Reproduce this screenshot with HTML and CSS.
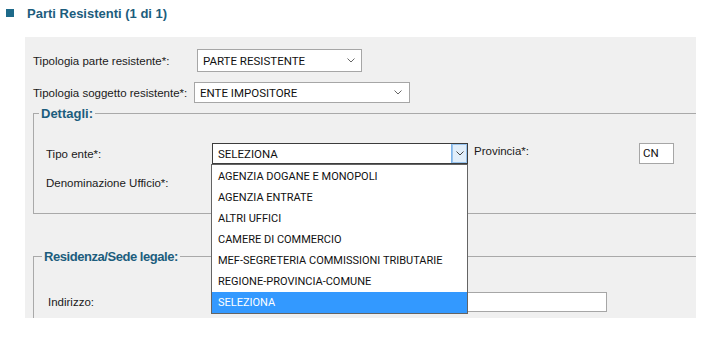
FILE: index.html
```html
<!DOCTYPE html>
<html lang="it">
<head>
    <meta charset="UTF-8">
    <meta name="viewport" content="width=device-width, initial-scale=1.0">
    <title>Parti Resistenti</title>
    <link rel="stylesheet" href="styles.css">
</head>
<body>
    <div class="heading">
        <span class="square"></span>
        <h2>Parti Resistenti (1 di 1)</h2>
    </div>

    <div class="panel">

        <div class="row row-parte">
            <label class="lbl-parte">Tipologia parte resistente*:</label>
            <div class="select select-parte">
                <span>PARTE RESISTENTE</span>
                <svg class="chev" width="8" height="5" viewBox="0 0 8 5"><polyline points="0.5,0.5 4,4 7.5,0.5" fill="none" stroke="#666" stroke-width="1"/></svg>
            </div>
        </div>

        <div class="row row-soggetto">
            <label class="lbl-soggetto">Tipologia soggetto resistente*:</label>
            <div class="select select-soggetto">
                <span>ENTE IMPOSITORE</span>
                <svg class="chev" width="8" height="5" viewBox="0 0 8 5"><polyline points="0.5,0.5 4,4 7.5,0.5" fill="none" stroke="#666" stroke-width="1"/></svg>
            </div>
        </div>

        <fieldset class="box box-dettagli">
            <legend>Dettagli:</legend>

            <div class="frow frow-tipo">
                <label class="flabel">Tipo ente*:</label>
                <div class="combo">
                    <div class="select select-open">
                        <span>SELEZIONA</span>
                        <span class="arrow-btn">
                            <svg width="8" height="5" viewBox="0 0 8 5"><polyline points="0.5,0.5 4,4 7.5,0.5" fill="none" stroke="#444" stroke-width="1"/></svg>
                        </span>
                    </div>
                    <ul class="dropdown">
                        <li>AGENZIA DOGANE E MONOPOLI</li>
                        <li>AGENZIA ENTRATE</li>
                        <li>ALTRI UFFICI</li>
                        <li>CAMERE DI COMMERCIO</li>
                        <li>MEF-SEGRETERIA COMMISSIONI TRIBUTARIE</li>
                        <li>REGIONE-PROVINCIA-COMUNE</li>
                        <li class="active">SELEZIONA</li>
                    </ul>
                </div>
                <label class="prov">Provincia*:</label>
                <input type="text" class="input input-cn" value="CN">
            </div>

            <div class="frow frow-denom">
                <label class="flabel">Denominazione Ufficio*:</label>
            </div>
        </fieldset>

        <fieldset class="box box-residenza">
            <legend>Residenza/Sede legale:</legend>
            <div class="frow frow-addr">
                <label class="flabel lbl-addr">Indirizzo:</label>
                <input type="text" class="input input-addr">
            </div>
        </fieldset>

    </div>
</body>
</html>
```

FILE: styles.css
```css
body{
    margin: 0;
    padding: 0;
    background-color: #fff;
    font-family: 'Liberation Sans', Arial, sans-serif;
    color: #1a1a1a;
}

.heading{
    display: flex;
    align-items: center;
    height: 26px;
    padding-left: 6px;
}
.square{
    width: 8px;
    height: 8px;
    background-color: #1e6a8a;
    margin-right: 13px;
}
.heading h2{
    margin: 0;
    font-size: 13px;
    font-weight: bold;
    color: #1c5d7d;
    line-height: 15px;
}

.panel{
    margin: 11px 0 0 25px;
    width: 671px;
    height: 281px;
    box-sizing: border-box;
    padding: 12px 0 0 8px;
    background-color: #f0f0f0;
    overflow: hidden;
}

label{
    font-size: 11.5px;
    line-height: 14px;
    flex: none;
}

.row{
    display: flex;
    align-items: center;
}
.row-parte{
    height: 23px;
}
.row-soggetto{
    height: 21px;
    margin-top: 10px;
}
.lbl-parte{
    width: 164px;
}
.lbl-soggetto{
    width: 161px;
}

/* finti select stile windows */
.select{
    display: flex;
    align-items: center;
    justify-content: space-between;
    box-sizing: border-box;
    background-color: #fff;
    border: 1px solid #a6a6a6;
    padding: 0 6px 0 5px;
    font-family: Roboto, 'Liberation Sans', sans-serif;
    font-size: 11.5px;
    color: #111;
}
.select-parte{
    width: 165px;
    height: 23px;
}
.select-soggetto{
    width: 216px;
    height: 21px;
    padding-right: 7px;
}

.box{
    margin: 3px 0 0 0;
    padding: 0 0 23px 12px;
    border: 1px solid #a9a9a9;
    border-right: none;
    min-width: 0;
}
.box legend{
    padding: 0 2px;
    margin-left: -7px;
    font-size: 13px;
    line-height: 15px;
    font-weight: bold;
    color: #1c5d7d;
}
.box-residenza{
    margin-top: 35px;
    padding-bottom: 40px;
}
.box-residenza legend{
    margin-left: -4px;
    letter-spacing: -0.45px;
}

.frow{
    display: flex;
    align-items: center;
}
.frow-tipo{
    margin-top: 22px;
    height: 21px;
}
.frow-denom{
    margin-top: 12px;
    height: 14px;
}
.frow-addr{
    margin-top: 28px;
    height: 20px;
}
.flabel{
    width: 166px;
}
.lbl-addr{
    padding-left: 2px;
    width: 164px;
}

.combo{
    position: relative;
    width: 256px;
    height: 21px;
}
.select-open{
    width: 256px;
    height: 21px;
    border-color: #3c3c3c;
    padding-right: 0;
}
.arrow-btn{
    display: flex;
    align-items: center;
    justify-content: center;
    width: 15px;
    height: 19px;
    background-color: #e1eefa;
    border-left: 1px solid #7eb4ea;
    box-shadow: inset 0 0 0 1px #98c4ef;
}

.dropdown{
    position: absolute;
    top: 21px;
    left: -1px;
    z-index: 5;
    width: 257px;
    box-sizing: border-box;
    margin: 0;
    padding: 1px 0 0 0;
    list-style: none;
    background-color: #fff;
    border: 1px solid #646464;
    font-family: Roboto, 'Liberation Sans', sans-serif;
    font-size: 11px;
    color: #111;
}
.dropdown li{
    height: 21px;
    line-height: 21px;
    padding-left: 6px;
}
.dropdown li.active{
    background-color: #3399ff;
    color: #fff;
}

.prov{
    margin-left: 6px;
    width: 165px;
    align-self: flex-start;
    margin-top: 1px;
}

.input{
    box-sizing: border-box;
    border: 1px solid #a6a6a6;
    background-color: #fff;
    font-family: Roboto, 'Liberation Sans', sans-serif;
    font-size: 11.5px;
    color: #111;
    padding: 0 3px;
    outline: none;
}
.input-cn{
    width: 35px;
    height: 21px;
    margin-top: -1px;
}
.input-addr{
    width: 395px;
    height: 20px;
}
```
